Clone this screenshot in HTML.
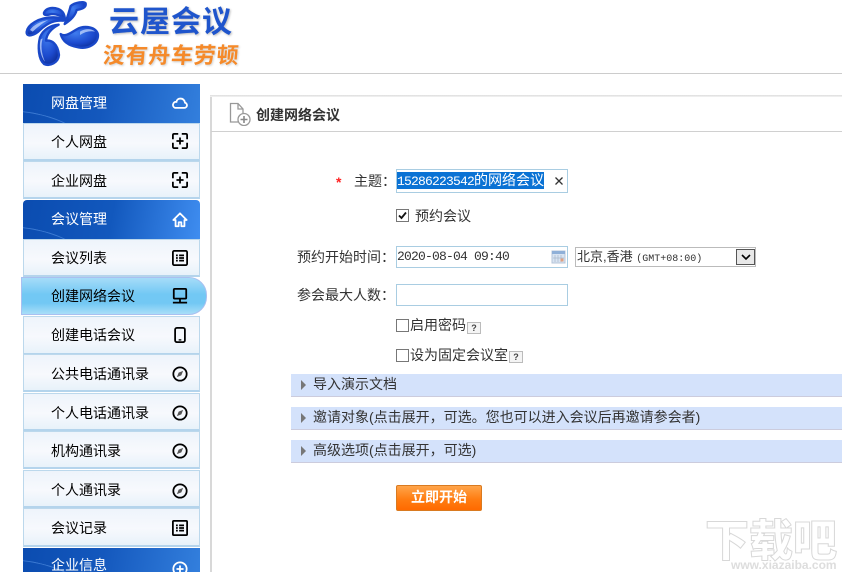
<!DOCTYPE html>
<html><head><meta charset="utf-8">
<style>
html,body{margin:0;padding:0;background:#fff}
#p{position:relative;width:842px;height:572px;overflow:hidden;background:#fff;font-family:"Liberation Sans","WenQuanYi Zen Hei","Noto Sans CJK SC",sans-serif;font-size:14px;color:#333}
#p div,#p span,#p svg{position:absolute}
#p span.s{position:static}
.hd{left:23px;width:177px;color:#fff;font-size:14px;background:linear-gradient(100deg,#0b4cb0 0%,#1458bd 45%,#337fdd 100%);overflow:hidden}
.hd:before{content:"";position:absolute;left:-30px;bottom:-22px;width:90px;height:30px;border-top:1px solid rgba(90,150,230,.6);border-radius:50%;transform:rotate(14deg)}
.it{left:23px;width:175px;border:1px solid #bcd8ec;border-bottom:2px solid #b4d4ec;background:linear-gradient(#eef4fb,#f7f9fd 55%,#e8f2fa);color:#000;font-size:14px;box-sizing:content-box}
.t{left:27px;white-space:nowrap;line-height:20px}
.ic{left:148px;width:16px;height:16px}
.l{white-space:nowrap;line-height:18px;font-size:14px;color:#333}
.bar{left:291px;width:551px;height:22px;background:#d4e2fb;border-bottom:1px solid #ccd;line-height:21px;font-size:14px;color:#333;white-space:nowrap}
.bar i{position:absolute;left:10px;top:6px;width:0;height:0;border-left:5px solid #777;border-top:5px solid transparent;border-bottom:5px solid transparent}
.bar b{position:absolute;left:22px;top:0;font-weight:normal}
.box{box-sizing:border-box;background:#fff;border:1px solid #a9cde2}
.cb{box-sizing:border-box;width:13px;height:13px;border:1px solid #777;background:#fff}
.q{width:14px;height:12px;border:1px solid #bbb;background:#f4f4f4;font:bold 9px/11px "Liberation Sans",sans-serif;text-align:center;color:#444;box-sizing:border-box}
.m{font-family:"Liberation Mono",monospace;font-size:13px;letter-spacing:-.8px}
</style></head><body>
<div id="p">
<!-- logo -->
<svg style="left:20px;top:0" width="90" height="72" viewBox="0 0 270 216">
<defs><radialGradient id="g" cx=".4" cy=".3" r=".8"><stop offset="0" stop-color="#3f7cee"/><stop offset=".6" stop-color="#1c4ace"/><stop offset="1" stop-color="#0b2a90"/></radialGradient></defs>
<g stroke="#1a48c8" stroke-width="7" stroke-linejoin="round">
<path fill="url(#g)" d="M20 95C23 75 55 52 100 52C115 52 125 55 130 62C105 60 85 67 60 90C45 105 18 115 20 95Z"/>
<path fill="url(#g)" d="M72 38C77 25 95 20 115 27C128 32 135 45 135 62C125 47 110 42 95 42C85 45 70 48 72 38Z"/>
<path fill="url(#g)" d="M152 18C165 7 193 3 197 10C200 25 180 28 170 30C165 50 150 62 134 72C142 55 147 35 152 18Z"/>
<path fill="url(#g)" d="M122 102C135 112 150 100 170 88C195 74 232 82 234 105C234 132 205 148 175 142C148 138 128 125 122 102Z"/>
<path fill="url(#g)" d="M116 74C95 85 80 100 78 122C95 120 113 130 117 165C115 188 90 200 72 192C55 178 53 140 60 112C70 87 95 75 116 74Z"/>
</g>
<path fill="#cfe0ff" opacity=".7" d="M30 90C40 75 60 65 85 60C65 70 50 85 38 95Z"/>
<path fill="#cfe0ff" opacity=".7" d="M68 115C62 135 64 160 75 185C62 170 56 140 62 118Z"/>
<path fill="#cfe0ff" opacity=".7" d="M180 95C195 85 215 85 225 95C210 92 195 95 180 105Z"/>
</svg>
<div style="left:109px;top:5px;font-size:30px;line-height:36px;font-weight:bold;color:#1f55cc;white-space:nowrap;letter-spacing:1px;font-family:'Liberation Sans','Noto Sans CJK SC',sans-serif;text-shadow:1px 1px 2px #bbb">云屋会议</div>
<div style="left:103px;top:43px;font-size:22px;line-height:26px;font-weight:bold;color:#f58a2a;white-space:nowrap;letter-spacing:.7px;font-family:'Liberation Sans','Noto Sans CJK SC',sans-serif;transform:skewX(-5deg);text-shadow:1px 1px 2px #ccc">没有舟车劳顿</div>
<div style="left:0;top:73px;width:842px;height:1px;background:#ccc"></div>

<!-- sidebar -->
<div class="hd" style="top:84px;height:39px"><span class="t" style="left:28px;top:9px">网盘管理</span>
<svg class="ic" style="left:149px;top:11px" viewBox="0 0 18 18"><path d="M3.500 14.500H14a3 3 0 0 0 .6-5.900C14 5.500 12 4 9.500 4 7 4 5.300 5.500 5 7.700A3.500 3.500 0 0 0 3.500 14.500Z" fill="none" stroke="#fff" stroke-width="2"/></svg></div>
<div class="it" style="top:123px;height:35px"><span class="t" style="top:8px">个人网盘</span>
<svg class="ic" style="top:9px" viewBox="0 0 18 18"><path d="M1 7V2.500Q1 1 2.500 1H7M11 1h4.500Q17 1 17 2.500V7M17 11v4.500Q17 17 15.500 17H11M7 17H2.500Q1 17 1 15.500V11" fill="none" stroke="#000" stroke-width="2"/><path d="M9 5v8M5 9h8" stroke="#000" stroke-width="2"/></svg></div>
<div class="it" style="top:161px;height:35px"><span class="t" style="top:9px">企业网盘</span>
<svg class="ic" style="top:10px" viewBox="0 0 18 18"><path d="M1 7V2.500Q1 1 2.500 1H7M11 1h4.500Q17 1 17 2.500V7M17 11v4.500Q17 17 15.500 17H11M7 17H2.500Q1 17 1 15.500V11" fill="none" stroke="#000" stroke-width="2"/><path d="M9 5v8M5 9h8" stroke="#000" stroke-width="2"/></svg></div>
<div class="hd" style="top:200px;height:39px;border-radius:4px 4px 0 0;background:linear-gradient(100deg,#0b4cb0 0%,#1258bd 50%,#3f8df0 100%)"><span class="t" style="left:28px;top:9px">会议管理</span>
<svg class="ic" style="left:149px;top:12px" viewBox="0 0 18 18"><path d="M9 1.500 1.500 9H4v7h3.500v-4.500h3V16H14V9h2.500Z" fill="none" stroke="#fff" stroke-width="2" stroke-linejoin="round"/></svg></div>
<div class="it" style="top:239px;height:35px"><span class="t" style="top:8px">会议列表</span>
<svg class="ic" style="top:10px" viewBox="0 0 18 18"><rect x="1" y="1" width="16" height="16" rx="1.500" fill="none" stroke="#000" stroke-width="2"/><path d="M4.500 5h2v2h-2zM8 5h5.500v2H8zM4.500 8h2v2h-2zM8 8h5.500v2H8zM4.500 11h2v2h-2zM8 11h5.500v2H8z" fill="#000"/></svg></div>
<div style="left:21px;top:277px;width:186px;height:38px;box-sizing:border-box;border:1px solid #a9c0f0;border-radius:0 18px 18px 0;background:linear-gradient(#a6dcf8,#72c8f4 45%,#72c8f4 70%,#a8def8);color:#000;font-size:14px"><span class="t" style="left:29px;top:8px">创建网络会议</span>
<svg class="ic" style="left:150px;top:10px" viewBox="0 0 18 18"><rect x="2" y="1" width="14" height="11" rx="1" fill="none" stroke="#000" stroke-width="2"/><path d="M9 12v4M1 16.500h16" stroke="#000" stroke-width="2"/></svg></div>
<div class="it" style="top:316px;height:36px;border-bottom-width:2px"><span class="t" style="top:8px">创建电话会议</span>
<svg class="ic" style="top:10px" viewBox="0 0 18 18"><rect x="3.500" y="1" width="11" height="16" rx="2" fill="none" stroke="#000" stroke-width="2"/><path d="M7.500 14.500h3" stroke="#000" stroke-width="1.500"/></svg></div>
<div class="it" style="top:354px;height:35px"><span class="t" style="top:9px">公共电话通讯录</span>
<svg class="ic" style="top:11px" viewBox="0 0 18 18"><circle cx="9" cy="9" r="7.500" fill="none" stroke="#000" stroke-width="2"/><path d="M12.500 5.500 10.500 10.500 5.500 12.500 7.500 7.500Z" fill="#555"/></svg></div>
<div class="it" style="top:393px;height:35px"><span class="t" style="top:9px">个人电话通讯录</span>
<svg class="ic" style="top:11px" viewBox="0 0 18 18"><circle cx="9" cy="9" r="7.500" fill="none" stroke="#000" stroke-width="2"/><path d="M12.500 5.500 10.500 10.500 5.500 12.500 7.500 7.500Z" fill="#555"/></svg></div>
<div class="it" style="top:431px;height:35px"><span class="t" style="top:9px">机构通讯录</span>
<svg class="ic" style="top:11px" viewBox="0 0 18 18"><circle cx="9" cy="9" r="7.500" fill="none" stroke="#000" stroke-width="2"/><path d="M12.500 5.500 10.500 10.500 5.500 12.500 7.500 7.500Z" fill="#555"/></svg></div>
<div class="it" style="top:470px;height:35px"><span class="t" style="top:9px">个人通讯录</span>
<svg class="ic" style="top:12px" viewBox="0 0 18 18"><circle cx="9" cy="9" r="7.500" fill="none" stroke="#000" stroke-width="2"/><path d="M12.500 5.500 10.500 10.500 5.500 12.500 7.500 7.500Z" fill="#555"/></svg></div>
<div class="it" style="top:508px;height:36px"><span class="t" style="top:9px">会议记录</span>
<svg class="ic" style="top:11px" viewBox="0 0 18 18"><rect x="1" y="1" width="16" height="16" rx="1" fill="none" stroke="#000" stroke-width="2"/><path d="M4.500 5h2v2h-2zM8 5h5.500v2H8zM4.500 8h2v2h-2zM8 8h5.500v2H8zM4.500 11h2v2h-2zM8 11h5.500v2H8z" fill="#000"/></svg></div>
<div class="hd" style="top:548px;height:24px"><span class="t" style="left:28px;top:7px">企业信息</span>
<svg class="ic" style="left:149px;top:13px" viewBox="0 0 18 18"><circle cx="9" cy="9" r="7.500" fill="none" stroke="#fff" stroke-width="2"/><path d="M9 5v8M5 9h8" stroke="#fff" stroke-width="2"/></svg></div>

<!-- panel -->
<div style="left:210px;top:95px;width:2px;height:477px;background:#d8d8d8"></div>
<div style="left:210px;top:95px;width:632px;height:2px;background:linear-gradient(#ddd,#f4f4f4)"></div>
<div style="left:211px;top:131px;width:631px;height:1px;background:#d0d0d0"></div>
<svg style="left:229px;top:102px" width="22" height="24" viewBox="0 0 22 24"><path d="M9 20H1.500V1.500H9L14 7V11M9 1.500V7H14" fill="none" stroke="#999" stroke-width="1.300"/><circle cx="15" cy="17.500" r="6" fill="#fff" stroke="#999" stroke-width="1.300"/><path d="M15 14v7M11.500 17.500h7" stroke="#888" stroke-width="1.600"/></svg>
<div style="left:256px;top:105px;font-size:14px;line-height:20px;font-weight:bold;color:#333;white-space:nowrap">创建网络会议</div>

<!-- form -->
<div style="left:336px;top:174px;color:#f22;font:bold 14px/16px 'Liberation Sans',sans-serif">*</div>
<div class="l" style="left:354px;top:172px">主题：</div>
<div class="box" style="left:396px;top:169px;width:172px;height:24px"></div>
<div style="left:397px;top:172px;width:147px;height:17px;background:#0a72d4;color:#fff;font-size:14px;line-height:17px;white-space:nowrap;overflow:hidden"><span class="s m">15286223542</span>的网络会议</div>
<svg style="left:554px;top:176px" width="10" height="10" viewBox="0 0 10 10"><path d="M1.500 1.500l7 7M8.500 1.500l-7 7" stroke="#333" stroke-width="1.300"/></svg>
<div class="cb" style="left:396px;top:209px"></div>
<svg style="left:397px;top:210px" width="11" height="11" viewBox="0 0 11 11"><path d="M2 5.500 4.500 8 9 2.500" fill="none" stroke="#111" stroke-width="1.800"/></svg>
<div class="l" style="left:415px;top:207px">预约会议</div>

<div class="l" style="left:297px;top:248px">预约开始时间：</div>
<div class="box" style="left:396px;top:246px;width:172px;height:22px"></div>
<div class="m" style="left:397px;top:248px;line-height:18px;color:#333;white-space:nowrap">2020-08-04 09:40</div>
<svg style="left:551px;top:250px" width="15" height="14" viewBox="0 0 15 14"><rect x="1" y="1" width="13" height="12" fill="#d8e4f2" stroke="#b4c4d8"/><rect x="1" y="1" width="13" height="3" fill="#8fb0d8"/><path d="M4 5v7M7 5v7M10 5v7M2 8h11" stroke="#a8b8cc" stroke-width=".7"/><rect x="9.500" y="8.500" width="3" height="3" fill="#e0a080"/></svg>
<div style="left:575px;top:247px;width:181px;height:20px;box-sizing:border-box;border:1px solid #bbb;background:#fff"></div>
<div style="left:577px;top:248px;font-size:13px;line-height:18px;white-space:nowrap;color:#333">北京,香港 <span class="s" style="font:10px 'Liberation Mono',monospace">(GMT+08:00)</span></div>
<div style="left:736px;top:249px;width:19px;height:16px;box-sizing:border-box;border:1px solid #555;background:#e8e8e8"></div>
<svg style="left:741px;top:254px" width="10" height="7" viewBox="0 0 10 7"><path d="M1 1l4 4 4-4" fill="none" stroke="#000" stroke-width="1.600"/></svg>

<div class="l" style="left:297px;top:286px">参会最大人数：</div>
<div class="box" style="left:396px;top:284px;width:172px;height:22px"></div>
<div class="cb" style="left:396px;top:319px"></div>
<div class="l" style="left:410px;top:316px">启用密码</div>
<div class="q" style="left:467px;top:322px">?</div>
<div class="cb" style="left:396px;top:349px"></div>
<div class="l" style="left:410px;top:346px">设为固定会议室</div>
<div class="q" style="left:509px;top:351px">?</div>

<div class="bar" style="top:374px"><i></i><b>导入演示文档</b></div>
<div class="bar" style="top:407px"><i></i><b>邀请对象(点击展开，可选。您也可以进入会议后再邀请参会者)</b></div>
<div class="bar" style="top:440px"><i></i><b>高级选项(点击展开，可选)</b></div>

<div style="left:396px;top:485px;width:86px;height:26px;box-sizing:border-box;border:1px solid #d97a20;border-radius:2px;background:linear-gradient(#ffa44a,#ff7d12 55%,#ff6a00);color:#fff;font-size:14px;font-weight:bold;line-height:23px;text-align:center">立即开始</div>

<!-- watermark -->
<div style="left:705px;top:508px;font-size:44px;line-height:58px;font-weight:900;color:#fff;white-space:nowrap;letter-spacing:0;font-family:'Noto Sans CJK SC',sans-serif;-webkit-text-stroke:1px #d8d8d8">下载吧</div>
<div style="left:731px;top:558px;font-size:12px;line-height:14px;color:#ddd;white-space:nowrap;font-weight:bold">www.xiazaiba.com</div>
</div>
</body></html>
